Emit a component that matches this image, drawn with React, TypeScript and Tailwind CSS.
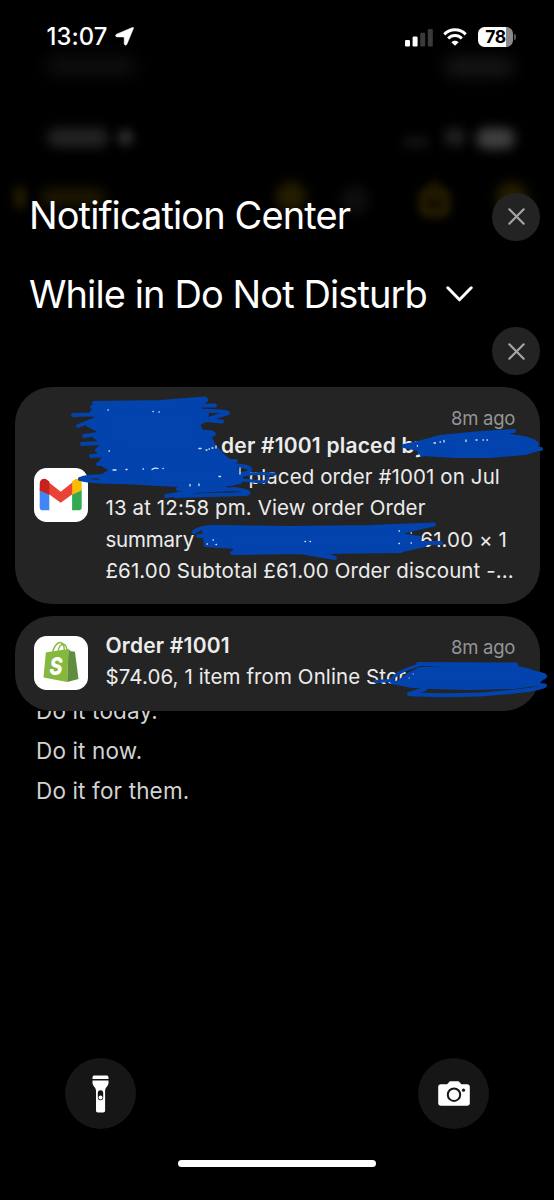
import React from "react";

const ink = "#0243ad";

function CloseButton() {
  return (
    <button className="flex size-12 shrink-0 items-center justify-center rounded-full bg-[#232323]">
      <svg className="size-[17px]" viewBox="0 0 17 17" fill="none" stroke="#a5a5a5" strokeWidth="2.2" strokeLinecap="round">
        <path d="M1.3 1.3l14.4 14.4M15.7 1.3L1.3 15.7" />
      </svg>
    </button>
  );
}

function StatusBar() {
  return (
    <div className="flex h-[74px] items-center justify-between pl-[46.500px] pr-[38px]">
      <div className="flex items-center gap-[7px]">
        <span className="text-[23.800px] font-medium leading-none tracking-[0.1px]">13:07</span>
        <svg className="h-[19px] w-[19px]" viewBox="0 0 19 19" fill="#fff">
          <path d="M17.300.5c.9-.4 1.500.2 1.100 1.100l-6.500 15.600c-.7 1.500-2.700 1.100-2.700-.5v-5.700c0-.8-.3-1.100-1.100-1.100H2.200C.4 9.900 0 7.900 1.500 7.200z" stroke="#fff" strokeWidth=".5" />
        </svg>
      </div>

      <div className="flex items-center">
        <svg className="h-[19px] w-[28px]" viewBox="0 0 28 19">
          <rect x="0" y="12" width="5" height="6.500" rx="1.300" fill="#fff" />
          <rect x="7.600" y="8.500" width="5" height="10" rx="1.300" fill="#fff" />
          <rect x="15.200" y="4.700" width="5" height="13.800" rx="1.300" fill="#3a3a3a" />
          <rect x="22.800" y="1" width="5" height="17.500" rx="1.300" fill="#3a3a3a" />
        </svg>
        <svg className="ml-[10px] h-[18px] w-[24px]" viewBox="0 0 24 18" fill="none" stroke="#fff" strokeWidth="3">
          <path d="M1.300 6.400C7.200.3 16.800.3 22.700 6.400" />
          <path d="M5.200 10.500c3.800-3.900 9.800-3.900 13.600 0" />
          <path d="M8.400 14.300c2-2 5.200-2 7.200 0L12 17.800z" fill="#fff" stroke="none" />
        </svg>
        <div className="ml-[11px] flex h-[20px] w-[35px] items-center justify-center rounded-[6.500px] bg-[linear-gradient(90deg,#fff_79%,#8a8a8a_79%)] text-[17.500px] font-bold leading-none tracking-[-0.3px] text-black">
          78
        </div>
        <div className="ml-[1px] h-[6px] w-[2px] rounded-r-full bg-[#5a5a5a]" />
      </div>
    </div>
  );
}

/* Dimmed remains of the app behind the sheet */
function Backdrop() {
  return (
    <div className="pointer-events-none absolute inset-x-0 top-0 h-[260px] overflow-hidden">
      <div className="absolute left-[46px] top-[57px] h-[18px] w-[90px] rounded-full bg-[#0f0f0f] blur-[8px]" />
      <div className="absolute left-[444px] top-[58px] h-[18px] w-[70px] rounded-full bg-[#171717] blur-[8px]" />
      <div className="absolute left-[47px] top-[128px] h-[19px] w-[62px] rounded-full bg-[#232323] blur-[6px]" />
      <div className="absolute left-[117px] top-[129px] size-[17px] rounded-full bg-[#292929] blur-[5px]" />
      <div className="absolute left-[402px] top-[136px] h-[12px] w-[28px] rounded-full bg-[#101010] blur-[5px]" />
      <div className="absolute left-[444px] top-[128px] h-[18px] w-[22px] rounded-full bg-[#212121] blur-[6px]" />
      <div className="absolute left-[476px] top-[128px] h-[21px] w-[39px] rounded-full bg-[#404040] blur-[6px]" />
      <div className="absolute left-[14px] top-[186px] h-[23px] w-[12px] rounded-full bg-[#241b00] blur-[5px]" />
      <div className="absolute left-[40px] top-[188px] h-[18px] w-[66px] rounded-full bg-[#1c1500] blur-[6px]" />
      <div className="absolute left-[276px] top-[182px] size-[30px] rounded-full bg-[#261d00] blur-[6px]" />
      <div className="absolute left-[341px] top-[186px] size-[28px] rounded-full bg-[#0e0e0e] blur-[6px]" />
      <div className="absolute left-[419px] top-[188px] h-[29px] w-[31px] rounded-lg border-[7px] border-[#2a2000] bg-[#120e00] blur-[4px]" />
      <div className="absolute left-[430px] top-[180px] h-[20px] w-[9px] rounded-full bg-[#221900] blur-[5px]" />
      <div className="absolute left-[496px] top-[182px] size-[32px] rounded-full bg-[#261d00] blur-[6px]" />
    </div>
  );
}

function GmailIcon() {
  return (
    <div className="-mt-[2px] size-[54px] shrink-0 overflow-hidden rounded-[12.500px] bg-white">
      <svg viewBox="0 0 54 54">
        <path d="M5.700 20.500l9.600 4V42.300H8.500c-1.600 0-2.800-1.200-2.800-2.800z" fill="#4285f4" />
        <path d="M47.700 20.500l-9.600 4V42.300h6.800c1.600 0 2.800-1.200 2.800-2.800z" fill="#34a853" />
        <path d="M12 12l14.700 11.700L41.400 12l-2 13.600L26.700 34.800 14 25.600z" fill="#ea4335" />
        <path d="M5.700 15.600c0-4.300 4.400-6.200 7.600-3.700l2 1.600v13.200l-9.600-4.300z" fill="#c5221f" />
        <path d="M47.700 15.600c0-4.300-4.400-6.200-7.600-3.700l-2 1.600v13.200l9.600-4.300z" fill="#fbbc04" />
      </svg>
    </div>
  );
}

function ShopifyIcon() {
  return (
    <div className="size-[54px] shrink-0 rounded-[12.500px] bg-white">
      <svg viewBox="0 0 54 54">
        <g fill="none" stroke="#86b840" strokeWidth="1.400">
          <path d="M18.500 17C19.500 11 23 6.500 26 6.500c3.500 0 4.300 4 4.300 8.500" />
          <path d="M24 16c.5-5 3-8 5.300-7.800 2.200.2 3.300 3 3.700 6" />
        </g>
        <path d="M12.500 16.300l22-3.300-1.300 33L9.500 41.500l2.200-23.700c.1-.9.100-1.300.800-1.500z" fill="#86b840" />
        <path d="M34.500 13l2.300 2.200 3.200.3c.8.100 1 .5 1.100 1.200L44.500 43l-11.300 3z" fill="#5e8e3e" />
        <text x="15.500" y="38.500" fill="#fff" fontSize="25" fontWeight="800" fontStyle="italic" textLength="13" lengthAdjust="spacingAndGlyphs">
          S
        </text>
      </svg>
    </div>
  );
}

function GmailCard() {
  return (
    <div className="relative flex h-[217px] items-center rounded-[37px] bg-[#242424] pl-[19px] pr-[25px]">
      <GmailIcon />
      <div className="ml-[17.500px] flex-1 whitespace-nowrap pb-[6px] text-[20.500px] leading-[31.200px] tracking-[0.1px] text-[#ececec]">
        <div className="flex h-[31px] justify-end pt-[4px] text-[18.500px] tracking-[-0.3px] text-[#959595]">8m ago</div>
        <p className="pl-[115.500px] text-[21px] font-semibold tracking-[0.2px]">der #1001 placed by</p>
        <p className="pl-[143px]">placed order #1001 on Jul</p>
        <p>13 at 12:58 pm. View order Order</p>
        <p className="flex justify-between pr-[8px]">
          <span className="tracking-[-0.2px]">summary</span>
          <span>61.00 × 1</span>
        </p>
        <p>£61.00 Subtotal £61.00 Order discount -...</p>
      </div>

      {/* Marker strokes */}
      <svg className="absolute left-0 top-0 h-[217px] w-[525px] overflow-visible" viewBox="15 387 525 217" fill="none" stroke={ink} strokeWidth="4" strokeLinecap="round" strokeLinejoin="round">
        <path fill={ink} d="M100 404L190 403 198 408 207 414 205 420 198 424 201 431 210 438 214 446 222 455 232 463 238 472 242 480 232 484 205 485 165 484 120 481 100 478 112 470 100 463 104 457 97 450 104 444 94 436 100 431 88 425 98 418 92 412z" />
        <path d="M94 403L160 402 205 398.500Q209 401 199 403L92 407 215 405.500" />
        <path d="M73 415L110 414 180 411Q226 410 228 413L205 420 222 421.500" />
        <path d="M78 426L98 418M84 436L110 432 190 432Q214 431 214 434L200 438M82 444L120 442M91 456L130 454 218 452M98 464L120 462 236 461" />
        <path d="M80 479Q90 475 115 477L150 470 230 465Q252 466 250 470 248 475 230 474M80 479Q88 482 120 482L200 486 240 482" />
        <path strokeWidth="3" d="M238 477Q250 472 275 474M243 480L262 482Q268 482 268 477" />
        <path d="M166 496L195 491 235 489Q254 492 246 494L175 496M178 489L225 488" />

        <path fill={ink} d="M420 446L440 441 470 436 505 434 518 438 530 441 538 449 525 453 490 456 455 456 422 454z" />
        <path d="M404 446Q420 443 440 437L480 433 514 431M404 446L418 449 422 455M517 437Q537 440 537 445L530 449 541 449" />

        <path fill={ink} d="M204 530L230 528 300 530 345 530 385 527 408 530 398 535 420 538 412 544 425 545 398 551 340 550 280 552 234 552 236 547 206 545z" />
        <path d="M194 532Q199 527 215 527L290 528 370 527 434 524.500 400 532M198 536L230 534M232 553L300 552 335 558 320 552 401 551M408 543L441 543" />

        {/* bits of lettering left uncovered */}
        <g stroke="#dfe6f5" strokeWidth="1.300">
          <path d="M109 451h.5M126 469.500h1M143 469h.5M199 448.500h2M206 450h1M209 449h.5M152 469.500q3-2 6-1M113 470h3M163 468.500h.3M190 484.500v1.500M199 484v1.500M219 476.500h1.500M153 411.500h.3M159 412h.3M108 410h.3M216 446v2M212 448h1M240 468v6" />
          <path d="M434 443h1.500M440 442h.5M444 440.500v1.500M466 440v1.500M476 440h1M483 440h.5M487 440h.5" />
          <path d="M207 544h.5M216 544.500h.5M213 540h.5M305 541.500h.5M310 541.500h.5M399 543.500h.5M411 543h.5M399 531h.5M411 533h.5" />
        </g>
      </svg>
    </div>
  );
}

function ShopifyCard() {
  return (
    <div className="relative flex h-[94.500px] items-center rounded-[37px] bg-[#242424] pl-[19px] pr-[25px]">
      <ShopifyIcon />
      <div className="ml-[17.500px] flex-1 whitespace-nowrap pb-[4px] text-[20.500px] leading-[31.200px] tracking-[0.1px] text-[#ececec]">
        <div className="flex h-[31px] justify-between">
          <h3 className="text-[21px] font-semibold tracking-[0.2px]">Order #1001</h3>
          <span className="pt-[2px] text-[18.500px] tracking-[-0.3px] text-[#959595]">8m ago</span>
        </div>
        <p>$74.06, 1 item from Online Store</p>
      </div>

      <svg className="absolute left-0 top-0 h-[94.500px] w-[525px] overflow-visible" viewBox="15 616 525 94.500" fill="none" stroke={ink} strokeWidth="4" strokeLinecap="round" strokeLinejoin="round">
        <path fill={ink} d="M400 681L408 675 420 669 470 667 510 666 530 671 539 676 535 684 515 687 470 688 430 687 412 685z" />
        <path strokeWidth="3" d="M375 681.500L390 680.500Q398 671 418 665.500" />
        <path d="M418 664L516 664.500M515 668L540 674Q549 676 542 678L538 682M392 682L412 686 430 686M425 689L409 694Q430 696 480 694.500L510 692Q540 689 545 685.500L530 684" />
        <g stroke="#b9c8e6" strokeWidth="1">
          <path d="M409 678h.5M413 674h.5" />
        </g>
      </svg>
    </div>
  );
}

export default function App() {
  return (
    <main className="relative h-[1200px] w-[554px] overflow-hidden bg-black font-['Inter',sans-serif] text-white">
      <Backdrop />

      <div className="relative flex h-full flex-col">
        <StatusBar />

        {/* Headings */}
        <header className="mt-[117px] pl-[29px] pr-[14px]">
          <div className="flex h-[51px] items-center justify-between">
            <h1 className="whitespace-nowrap pb-1 text-[38px] leading-[46px] tracking-[-0.9px]">Notification Center</h1>
            <CloseButton />
          </div>
          <div className="mt-[28px] flex h-[48px] items-center gap-[19px]">
            <h2 className="whitespace-nowrap text-[38px] leading-[46px] tracking-[-0.9px]">While in Do Not Disturb</h2>
            <svg className="h-[16px] w-[27px]" viewBox="0 0 27 16" fill="none" stroke="#fff" strokeWidth="3" strokeLinecap="round" strokeLinejoin="round">
              <path d="M1.800 1.800l11.700 12 11.700-12" />
            </svg>
          </div>
          <div className="mt-[9px] flex justify-end">
            <CloseButton />
          </div>
        </header>

        {/* Notifications */}
        <section className="mt-[12px] flex flex-col gap-[12px] pl-[15px] pr-[14px]">
          <GmailCard />
          <ShopifyCard />
        </section>

        {/* Note text behind the sheet */}
        <div className="h-[110px] overflow-hidden pl-[36px] text-[22.500px] leading-[40px] tracking-[0.15px] text-[#d2d2d2]">
          <div className="-mt-[20px]">
            <p>Do it today.</p>
            <p>Do it now.</p>
            <p>Do it for them.</p>
          </div>
        </div>

        {/* Quick actions */}
        <footer className="mt-auto">
          <div className="flex justify-between px-[65px]">
            <button className="flex size-[71px] items-center justify-center rounded-full bg-[#161616]">
              <svg className="h-[38px] w-[17px]" viewBox="0 0 17 38" fill="#fff">
                <path d="M.5 4V2.500C.5 1 1.500.5 2.500.5h12c1 0 2 .5 2 2V4zM.5 5.500h16v2.300c0 3.500-3.400 4.500-3.400 8V35.500c0 1.300-.6 2-2 2H6c-1.400 0-2-.7-2-2V15.800c0-3.500-3.500-4.500-3.500-8z" />
                <rect x="5.800" y="15.300" width="5.400" height="10" rx="2.700" fill="#161616" />
                <circle cx="8.500" cy="22.600" r="2" />
              </svg>
            </button>
            <button className="flex size-[71px] items-center justify-center rounded-full bg-[#161616]">
              <svg className="h-[25px] w-[32px]" viewBox="0 0 32 25" fill="#fff">
                <path d="M3 3.200h5.500c1 0 1.300-.6 2-1.500C11.200.7 12 .3 13 .3h6.500c1 0 1.800.4 2.500 1.400.7.9 1 1.500 2 1.500h5c1.800 0 2.800 1 2.800 2.800v16c0 1.800-1 2.800-2.800 2.800H3C1.200 24.800.2 23.800.2 22V6C.2 4.200 1.200 3.200 3 3.200z" />
                <circle cx="16" cy="13.700" r="6.200" fill="none" stroke="#161616" strokeWidth="2" />
                <circle cx="25.500" cy="9.200" r="1.600" fill="#161616" />
              </svg>
            </button>
          </div>
          <div className="mx-auto mb-[33px] mt-[31px] h-[7px] w-[198px] rounded-full bg-white" />
        </footer>
      </div>
    </main>
  );
}
